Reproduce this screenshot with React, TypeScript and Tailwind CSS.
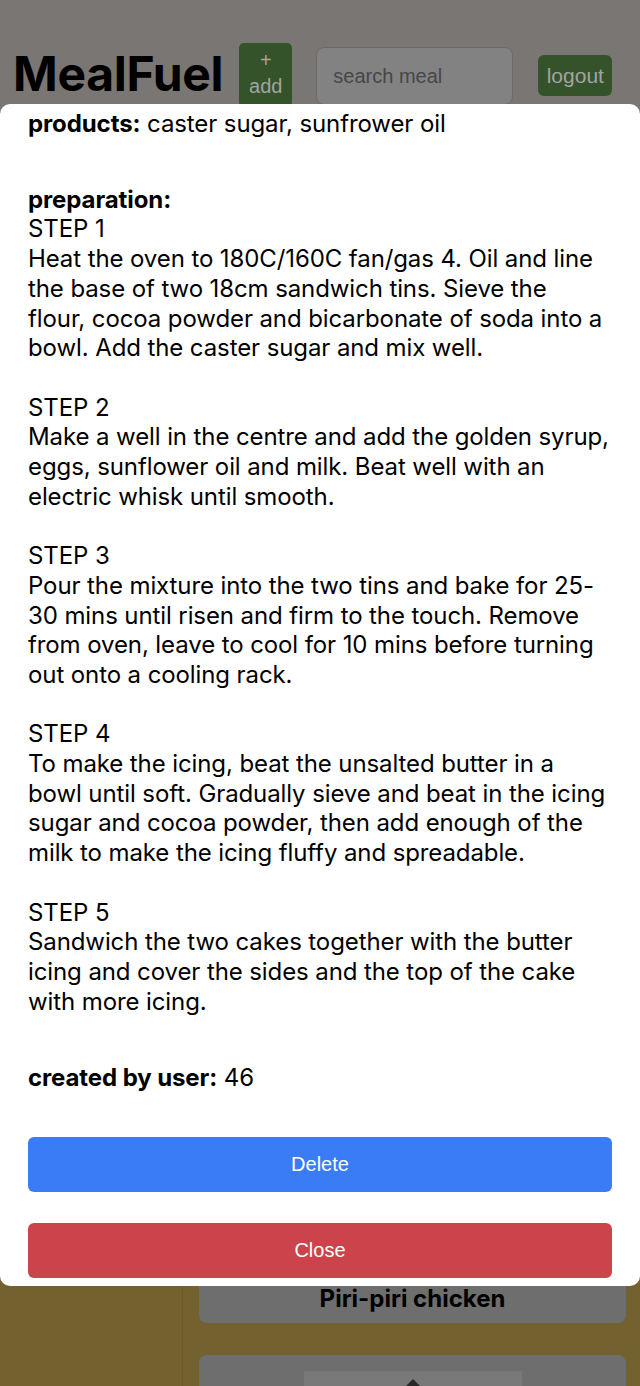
import React from "react";

const steps = [
  "Heat the oven to 180C/160C fan/gas 4. Oil and line the base of two 18cm sandwich tins. Sieve the flour, cocoa powder and bicarbonate of soda into a bowl. Add the caster sugar and mix well.",
  "Make a well in the centre and add the golden syrup, eggs, sunflower oil and milk. Beat well with an electric whisk until smooth.",
  "Pour the mixture into the two tins and bake for 25-30 mins until risen and firm to the touch. Remove from oven, leave to cool for 10 mins before turning out onto a cooling rack.",
  "To make the icing, beat the unsalted butter in a bowl until soft. Gradually sieve and beat in the icing sugar and cocoa powder, then add enough of the milk to make the icing fluffy and spreadable.",
  "Sandwich the two cakes together with the butter icing and cover the sides and the top of the cake with more icing.",
];

export default function App() {
  return (
    <div className="relative h-[1386px] w-[640px] overflow-hidden bg-[#736230] font-['Inter',sans-serif]">
      {/* page behind the modal (already dimmed) */}
      <header className="flex h-[112px] items-start bg-[#7a7674] pl-[13px] pt-[43px]">
        <h1 className="mt-[7px] text-[48px] font-bold leading-none tracking-[-0.3px] text-black">MealFuel</h1>
        <button className="ml-[16px] flex h-[64px] w-[53px] flex-col items-center rounded-[5px] bg-[#34532a] pt-[4px] font-['Liberation_Sans',sans-serif] text-[20px] leading-[26px] text-[#a3a3a3]">
          <span>+</span>
          <span>add</span>
        </button>
        <div className="ml-[24px] mt-[4px] flex h-[58px] w-[197px] items-center rounded-[8px] border border-[#6c6a69] bg-[#828282] pl-[16px] font-['Liberation_Sans',sans-serif] text-[20px] text-[#474747]">
          search meal
        </div>
        <button className="ml-[25px] mt-[12px] h-[41px] w-[74px] rounded-[6px] bg-[#34532a] font-['Liberation_Sans',sans-serif] text-[21px] text-[#a3a3a3]">
          logout
        </button>
      </header>
      <div className="flex">
        <div className="h-[1300px] w-[183px] border-r border-[#6b5a2b]" />
        <div className="flex w-[443px] flex-col gap-[32px] pl-[16px] pt-[1163px]">
          <div className="flex h-[48px] items-end justify-center rounded-[8px] bg-[#6e6e6e] pb-[6px] text-[24px] font-bold text-black">
            Piri-piri chicken
          </div>
          <div className="flex h-[60px] justify-center rounded-[8px] bg-[#6e6e6e] pt-[16px]">
            <div className="flex w-[218px] justify-center bg-[#797979] pt-[8px]">
              <div className="h-0 w-0 border-x-[8px] border-b-[8px] border-x-transparent border-b-[#2a2a2a]" />
            </div>
          </div>
        </div>
      </div>

      {/* modal */}
      <div className="absolute left-0 top-[104px] flex h-[1182px] w-[640px] flex-col rounded-[10px] bg-white pl-[28px] pr-[30px] text-[24px] leading-[29.7px] tracking-[-0.1px] text-black">
        <p className="mt-[5px]">
          <b className="font-bold">products:</b> caster sugar, sunfrower oil
        </p>
        <p className="mt-[46px] font-bold">preparation:</p>
        <div className="flex flex-col gap-[29.7px]">
          {steps.map((s, i) => (
            <div key={i}>
              <p>STEP {i + 1}</p>
              <p>{s}</p>
            </div>
          ))}
        </div>
        <p className="mt-[47px]">
          <b className="font-bold">created by user:</b> 46
        </p>
        <button className="mt-[44px] h-[55px] w-[584px] shrink-0 self-start rounded-[6px] bg-[#3a7cf6] font-['Liberation_Sans',sans-serif] text-[20px] tracking-normal text-white">
          Delete
        </button>
        <button className="mt-[31px] h-[55px] w-[584px] shrink-0 self-start rounded-[6px] bg-[#cb444b] font-['Liberation_Sans',sans-serif] text-[20px] tracking-normal text-white">
          Close
        </button>
      </div>
    </div>
  );
}
